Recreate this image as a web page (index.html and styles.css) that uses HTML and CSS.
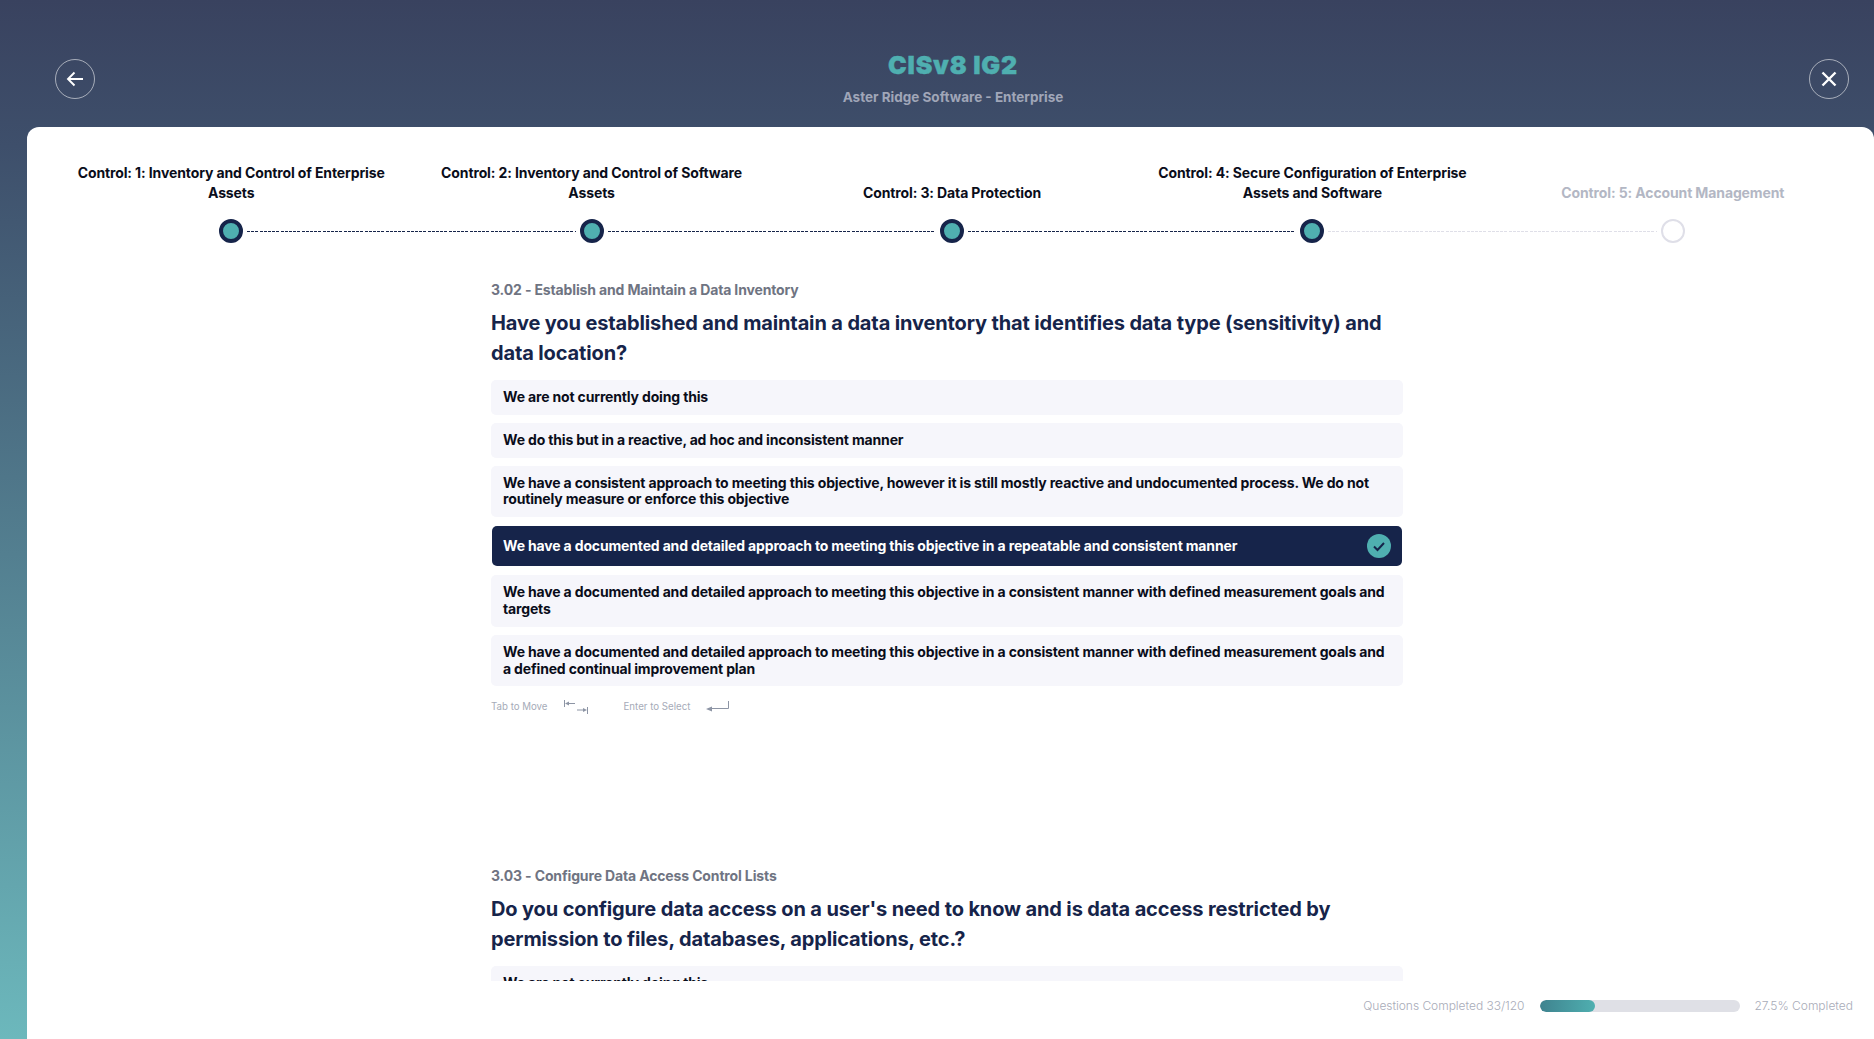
FILE: index.html
```html
<!DOCTYPE html>
<html lang="en">
<head>
<meta charset="utf-8">
<title>CISv8 IG2</title>
<link rel="stylesheet" href="styles.css">
</head>
<body>
<div class="app">
  <header class="top">
    <button class="round" aria-label="Back">
      <svg viewBox="0 0 20 20" width="20" height="20"><path d="M18 10H3M9.5 3.5 3 10l6.5 6.5" fill="none" stroke="#fff" stroke-width="1.9"/></svg>
    </button>
    <div class="heading">
      <h1 class="title">CISv8 IG2</h1>
      <p class="sub">Aster Ridge Software - Enterprise</p>
    </div>
    <button class="round" aria-label="Close">
      <svg viewBox="0 0 20 20" width="20" height="20"><path d="M3.5 3.5l13 13M16.5 3.5l-13 13" fill="none" stroke="#fff" stroke-width="2.4"/></svg>
    </button>
  </header>
  <main class="card">
    <ol class="steps">
      <li class="step done"><span class="step-label">Control: 1: Inventory and Control of Enterprise Assets</span><span class="track"><span class="dot"></span></span></li>
      <li class="step done"><span class="step-label">Control: 2: Inventory and Control of Software Assets</span><span class="track"><span class="dot"></span></span></li>
      <li class="step done"><span class="step-label">Control: 3: Data Protection</span><span class="track"><span class="dot"></span></span></li>
      <li class="step done"><span class="step-label">Control: 4: Secure Configuration of Enterprise Assets and Software</span><span class="track"><span class="dot"></span></span></li>
      <li class="step todo"><span class="step-label">Control: 5: Account Management</span><span class="track"><span class="dot"></span></span></li>
    </ol>
    <div class="scroll">
      <section class="question">
        <div class="q-label">3.02 - Establish and Maintain a Data Inventory</div>
        <h2 class="q-text">Have you established and maintain a data inventory that identifies data type (sensitivity) and data location?</h2>
        <ul class="options">
          <li class="option">We are not currently doing this</li>
          <li class="option">We do this but in a reactive, ad hoc and inconsistent manner</li>
          <li class="option">We have a consistent approach to meeting this objective, however it is still mostly reactive and undocumented process. We do not routinely measure or enforce this objective</li>
          <li class="option selected">We have a documented and detailed approach to meeting this objective in a repeatable and consistent manner
            <span class="check"><svg viewBox="0 0 24 24" width="24" height="24"><path d="M7 12.5l3.5 3.5L17 9" fill="none" stroke="#16244a" stroke-width="2"/></svg></span>
          </li>
          <li class="option">We have a documented and detailed approach to meeting this objective in a consistent manner with defined measurement goals and targets</li>
          <li class="option">We have a documented and detailed approach to meeting this objective in a consistent manner with defined measurement goals and a defined continual improvement plan</li>
        </ul>
        <div class="hints">
          <span class="hint">Tab to Move</span>
          <svg class="hint-ico" viewBox="0 0 24 14" width="24" height="14"><path d="M.5 0v7M3 3.5h8M13 10h8M23.5 7v7" fill="none" stroke="#8d95a5" stroke-width="1"/><path d="M1 3.5 5 1.5v4zM23 10l-4-2v4z" fill="#8d95a5"/></svg>
          <span class="hint hint-second">Enter to Select</span>
          <svg class="hint-ico" viewBox="0 0 23 12" width="23" height="12"><path d="M22.5 0v7.5H4" fill="none" stroke="#8d95a5" stroke-width="1"/><path d="M0 8l6-2.5v5z" fill="#8d95a5"/></svg>
        </div>
      </section>
      <section class="question">
        <div class="q-label">3.03 - Configure Data Access Control Lists</div>
        <h2 class="q-text">Do you configure data access on a user's need to know and is data access restricted by permission to files, databases, applications, etc.?</h2>
        <ul class="options">
          <li class="option">We are not currently doing this</li>
        </ul>
      </section>
    </div>
    <footer class="progress">
      <span class="p-text">Questions Completed 33/120</span>
      <span class="bar"><span class="fill" style="width:27.5%"></span></span>
      <span>27.5% Completed</span>
    </footer>
  </main>
</div>
</body>
</html>
```
FILE: styles.css
```css
* { box-sizing: border-box; }
html, body { margin: 0; height: 100%; overflow: hidden; }
body {
  font-family: Inter, "Liberation Sans", sans-serif;
  background: linear-gradient(180deg, #39425f 0%, #3e4f6b 14%, #6cb8bc 100%);
}
.app { height: 1039px; display: flex; flex-direction: column; }
.top {
  height: 127px;
  padding: 59px 25px 0 55px;
  display: flex;
  justify-content: space-between;
  align-items: flex-start;
}
.round {
  width: 40px;
  height: 40px;
  padding: 0;
  border: 1px solid rgba(255,255,255,.55);
  border-radius: 50%;
  background: transparent;
  display: flex;
  align-items: center;
  justify-content: center;
}
.heading { text-align: center; margin-top: -10px; padding-left: 2px; }
.title {
  margin: 0;
  font-size: 25px;
  line-height: 32px;
  font-weight: 900;
  color: #4fafb0;
  letter-spacing: .8px;
  -webkit-text-stroke: .4px #4fafb0;
}
.sub {
  margin: 6px 0 0;
  font-size: 13.5px;
  line-height: 20px;
  font-weight: 650;
  color: #a0a6b8;
}
.card {
  flex: 1;
  margin-left: 27px;
  background: #fff;
  border-radius: 12px 12px 0 0;
  padding: 36px 21px 0 24px;
  display: flex;
  flex-direction: column;
  min-height: 0;
}
.steps { list-style: none; margin: 0; padding: 0; display: grid; grid-template-columns: repeat(5, 1fr); }
.step { display: flex; flex-direction: column; align-items: center; justify-content: flex-end; position: relative; }
.step-label {
  font-size: 14px;
  line-height: 20px;
  font-weight: 650;
  letter-spacing: -.12px;
  color: #0a0d1a;
  text-align: center;
  padding: 0 20px;
}
.track { height: 24px; margin-top: 16px; position: relative; display: block; width: 100%; }
.dot {
  position: absolute;
  left: 50%;
  top: 0;
  margin-left: -12px;
  width: 24px;
  height: 24px;
  border-radius: 50%;
  border: 4px solid #16244a;
  background: #4fafb0;
}
.step:not(:last-child) .track::after {
  content: "";
  position: absolute;
  left: calc(50% + 16px);
  right: calc(-50% + 16px);
  top: 12px;
  height: 1px;
  background: repeating-linear-gradient(90deg, #16244a 0 3px, transparent 3px 4.2px);
}
.step.done:nth-child(4) .track::after {
  background: repeating-linear-gradient(90deg, #dfdfe8 0 3px, transparent 3px 4.2px);
}
.todo .step-label { color: #b3b7c4; }
.todo .dot { background: #fff; border: 2px solid #dfdfe8; }
.scroll {
  flex: 0 0 auto;
  height: 701px;
  margin-top: 37px;
  overflow: hidden;
  padding-left: 440px;
}
.question { width: 912px; height: 586px; }
.q-label { font-size: 14px; line-height: 20px; font-weight: 650; letter-spacing: -.14px; color: #6f7482; }
.q-text { margin: 8px 0 0; font-size: 20px; line-height: 30px; font-weight: 700; letter-spacing: -.135px; color: #16244a; }
.options { list-style: none; margin: 12px 0 0; padding: 0; display: flex; flex-direction: column; gap: 8px; }
.option {
  padding: 9px 12px;
  background: #f6f6fb;
  border-radius: 5px;
  font-size: 14px;
  line-height: 16.8px;
  font-weight: 650;
  letter-spacing: -.16px;
  color: #0a0d1a;
  display: flex;
  align-items: center;
}
.option.selected {
  position: relative;
  margin: 1px;
  padding: 8px 11px;
  min-height: 40px;
  background: #16244a;
  color: #fff;
}
.check {
  position: absolute;
  right: 11px;
  top: 8px;
  width: 24px;
  height: 24px;
  border-radius: 50%;
  background: #4fafb0;
  display: block;
}
.hints { display: flex; align-items: center; margin-top: 14px; color: #a6abb8; }
.hint { font-size: 9.7px; line-height: 14px; }
.hint-second { margin-left: 36px; }
.hint-ico { margin-left: 16px; }
.progress {
  flex: 1;
  display: flex;
  align-items: flex-start;
  justify-content: flex-end;
  gap: 15px;
  padding-top: 19px;
  font-size: 12px;
  line-height: 12px;
  font-weight: 300;
  color: #a8abb8;
}
.p-text { letter-spacing: -.03px; }
.bar { width: 200px; height: 12px; border-radius: 6px; background: #dfe0e6; display: block; overflow: hidden; }
.fill { display: block; height: 100%; border-radius: 6px; background: linear-gradient(90deg, #3f838f, #4fafb0); }
```
